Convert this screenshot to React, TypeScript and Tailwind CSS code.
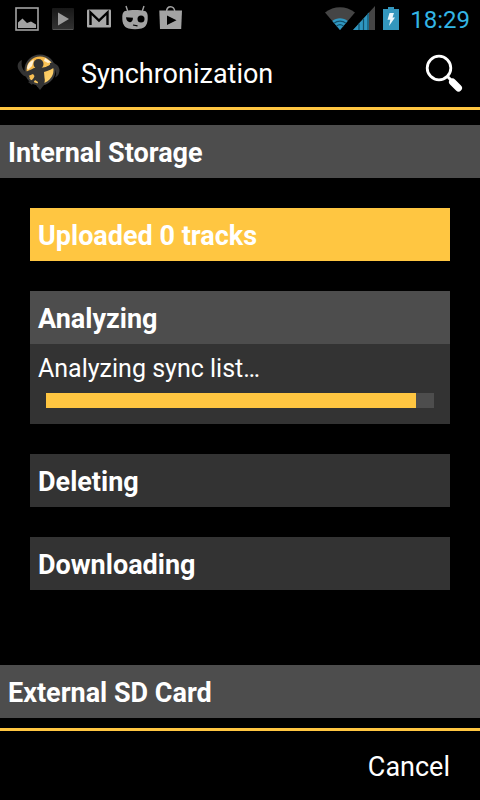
import React from "react";

type StepProps = {
  title: string;
  state?: "pending" | "active" | "done";
  message?: string;
  progress?: number;
};

const stepColors = {
  pending: "bg-[#333333]",
  active: "bg-[#4d4d4d]",
  done: "bg-[#ffc641]",
};

const StatusBar: React.FC = () => (
  <div className="flex h-[38px] items-center justify-between pr-[10px] pl-[15px]">
    <div className="flex items-center gap-3">
      <svg className="size-6" viewBox="0 0 24 24" aria-hidden="true">
        <rect x="1" y="1" width="22" height="22" fill="none" stroke="#a3a3a3" strokeWidth="1.6" />
        <path d="M3 21V15.5L7.5 11.5L12 16L16 14.5L21 17.5V21Z" fill="#a3a3a3" />
      </svg>
      <svg className="size-6" viewBox="0 0 24 24" aria-hidden="true">
        <defs>
          <linearGradient id="play" x1="0" y1="0" x2="0" y2="1">
            <stop offset="0" stopColor="#181818" />
            <stop offset="1" stopColor="#333333" />
          </linearGradient>
        </defs>
        <rect x="1" y="1" width="22" height="22" rx="1" fill="url(#play)" />
        <path d="M2 22.5H22" stroke="#555555" />
        <path d="M7 5.5L18 12L7 18.5Z" fill="#9b9b9b" />
      </svg>
      <svg className="size-6" viewBox="0 0 24 24" aria-hidden="true">
        <rect y="2.5" width="24" height="18" rx="1" fill="#a8a8a8" />
        <path d="M3.5 18V5.5L12 13.5L20.5 5.5V18" fill="none" stroke="#000" strokeWidth="2.4" />
      </svg>
      <svg className="size-6 overflow-visible" viewBox="0 0 24 24" aria-hidden="true">
        <path d="M3 -1L5 5M21 -1L19 5" stroke="#a3a3a3" strokeWidth="1.4" />
        <path
          d="M2 4C8 2.5 16 2.5 22 4C24.5 5 25 8 24.6 13C24.2 18 22 20.5 18.5 21.4C14 22.4 10 22.4 5.5 21.4C2 20.5 -.2 18 -.6 13C-1 8 -.5 5 2 4Z"
          fill="#a3a3a3"
        />
        <path d="M3 10.3L10 10.8C10 17 3.5 16.5 3 10.3Z" fill="#000" />
        <circle cx="18" cy="12" r="3.5" fill="#000" />
        <path d="M10 18L14.5 18.8" stroke="#000" strokeWidth="1.2" />
      </svg>
      <svg className="size-6 overflow-visible" viewBox="0 0 24 24" aria-hidden="true">
        <path d="M7.5 5C7.5 -2 15.8 -2 15.8 5" fill="none" stroke="#a3a3a3" strokeWidth="1.4" />
        <path d="M.3 3.6H23L22.2 22H1Z" fill="#a3a3a3" />
        <path d="M8 8.5L17.5 13.2L8 18Z" fill="#000" />
      </svg>
    </div>
    <div className="flex items-center">
      <svg className="h-6 w-[30px]" viewBox="0 0 30 24" aria-hidden="true">
        <path d="M0 5.6C9 -1.4 21 -1.4 30 5.6L15 23Z" fill="#454545" />
        <path d="M7.3 14C11.5 10.4 18.5 10.4 22.7 14L15 23Z" fill="#2f97c1" />
        <path
          d="M9 16.2C12.5 13.4 17.5 13.4 21 16.2M11.5 19C13.5 17.4 16.5 17.4 18.5 19"
          fill="none"
          stroke="#12506a"
          strokeWidth="1.1"
        />
      </svg>
      <svg className="-ml-0.5 h-6 w-[22px] overflow-visible" viewBox="0 0 22 24" aria-hidden="true">
        <path d="M0 23L22 -1V23Z" fill="#454545" />
        <path d="M0 23L16 5.5V23Z" fill="#2f97c1" />
        <path d="M6 16.5V23M10.5 11.5V23M15 6.5V23" stroke="#12506a" strokeWidth="1.2" />
      </svg>
      <svg className="ml-2 h-6 w-4" viewBox="0 0 16 24" aria-hidden="true">
        <path d="M5 0H11V2H16V23H0V2H5Z" fill="#3396bd" />
        <path d="M6.5 6H11L9.5 10.5H12L6 19L7.3 12.8H4.5Z" fill="#eaf6fb" />
      </svg>
      <time className="ml-[11px] pt-0.5 text-2xl leading-8 text-[#33b5e5]">18:29</time>
    </div>
  </div>
);

const Logo: React.FC = () => (
  <svg className="h-[38px] w-11" viewBox="0 0 44 38" aria-hidden="true">
    <defs>
      <linearGradient id="disc" x1="0" y1="0" x2="1" y2="1">
        <stop offset="0" stopColor="#f2ab35" />
        <stop offset="1" stopColor="#ffd877" />
      </linearGradient>
    </defs>
    <path d="M19 31L23 36L27 31Z" fill="#333333" />
    <circle cx="23" cy="16" r="14.500" fill="url(#disc)" stroke="#3d3d3d" strokeWidth="2" />
    <path d="M10 14C10.500 10 13 7 17 5.500L15 12L11 16Z" fill="#fff0d2" />
    <path d="M28 4L34 8L31 9L27 7Z" fill="#fff0d2" />
    <path
      d="M5 6C0 8 -.5 13 2.500 17C4.500 20.500 8 23 13 24L11 20C6 17 3.500 12 5 6Z"
      fill="#333333"
    />
    <path d="M33 9C40 8 44 14 42 19C41.500 21 40 23 38 23.500C41 18 38 14 33 12Z" fill="#333333" />
    <circle cx="21.500" cy="10" r="5" fill="#333333" />
    <path
      d="M4 17C10 18.500 13 16 17 14L26 13.500C30 13.500 33 10 37 9L39 12C36 15 31 17 27 18L27.500 24C28.500 27 27 32 24 33L20 33L21 28L18 26L15 31L11 28C14 27 17 25 17.500 22L16 20C12 22 9 23 6 21Z"
      fill="#333333"
    />
  </svg>
);

const StorageTitle: React.FC<{ children: React.ReactNode }> = ({ children }) => (
  <h2 className="bg-[#4d4d4d] px-2 pt-3 pb-[9px] text-[27px] leading-8 font-bold">
    {children}
  </h2>
);

const SyncStep: React.FC<StepProps> = ({ title, state = "pending", message, progress = 0 }) => (
  <section className="bg-[#333333]">
    <h3 className={`${stepColors[state]} px-2 pt-3 pb-[9px] text-[27px] leading-8 font-bold`}>
      {title}
    </h3>
    {message && (
      <div className="px-2 pt-[9px] pb-4">
        <p className="text-[25px] leading-8">{message}</p>
        <div
          role="progressbar"
          aria-label={message}
          aria-valuenow={progress}
          aria-valuemin={0}
          aria-valuemax={100}
          className="mx-2 mt-2 h-[15px] bg-[#4d4d4d]"
        >
          <div className="h-full bg-[#ffc641]" style={{ width: `${progress}%` }} />
        </div>
      </div>
    )}
  </section>
);

const App: React.FC = () => {
  return (
    <div className="flex min-h-screen w-full flex-col bg-black font-[Roboto,sans-serif] text-white">
      <StatusBar />
      <header className="flex h-[72px] items-center border-b-[3px] border-[#ffc641] pr-4 pl-[17px]">
        <Logo />
        <h1 className="ml-5 flex-1 pt-0.5 text-[27px] leading-8">Synchronization</h1>
        <button type="button" aria-label="Search">
          <svg className="size-10" viewBox="0 0 40 40" aria-hidden="true">
            <circle cx="15" cy="15" r="11.800" fill="none" stroke="#fff" strokeWidth="2.800" />
            <path d="M23 23L28 28" stroke="#fff" strokeWidth="3" />
            <path d="M28.500 29L34.500 35" stroke="#fff" strokeWidth="7" strokeLinecap="round" />
          </svg>
        </button>
      </header>

      <main className="flex-1 pt-[15px] pb-[10px]">
        <StorageTitle>Internal Storage</StorageTitle>
        <div className="flex flex-col gap-[30px] px-[30px] pt-[30px] pb-[75px]">
          <SyncStep title="Uploaded 0 tracks" state="done" />
          <SyncStep title="Analyzing" state="active" message="Analyzing sync list…" progress={95.4} />
          <SyncStep title="Deleting" />
          <SyncStep title="Downloading" />
        </div>
        <StorageTitle>External SD Card</StorageTitle>
      </main>

      <footer className="flex h-[72px] items-center justify-end border-t-[3px] border-[#ffc641] px-[30px]">
        <button type="button" className="pt-0.5 text-[27px] leading-8">
          Cancel
        </button>
      </footer>
    </div>
  );
};

export default App;
